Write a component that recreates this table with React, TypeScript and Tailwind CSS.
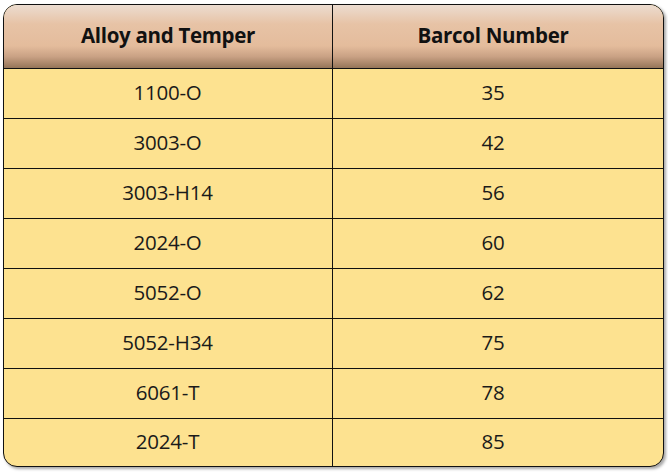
const rows = [
  ["1100-O", "35"],
  ["3003-O", "42"],
  ["3003-H14", "56"],
  ["2024-O", "60"],
  ["5052-O", "62"],
  ["5052-H34", "75"],
  ["6061-T", "78"],
  ["2024-T", "85"],
];

export default function App() {
  return (
    <div className="w-[668px] h-[472px] bg-white pl-[3px] pt-[4px]" style={{ fontFamily: '"Open Sans", "Noto Sans", sans-serif' }}>
      <div className="w-[661px] rounded-[14px] border-[1.5px] border-[#111] overflow-hidden shadow-[2px_2px_3px_rgba(0,0,0,0.35)] bg-[#fde290]">
        <div className="grid grid-cols-[329px_1fr] h-[64px] border-b-[1.5px] border-[#111] bg-[linear-gradient(to_bottom,#ecdcd0_0%,#e7c3a6_30%,#e4bc9c_65%,#c9a184_82%,#957559_100%)]">
          <div className="flex items-center justify-center border-r-[1.5px] border-[#111] text-[20.5px] font-bold tracking-[-0.3px] text-[#111] pb-[3px]">
            Alloy and Temper
          </div>
          <div className="flex items-center justify-center text-[20.5px] font-bold tracking-[-0.3px] text-[#111] pb-[3px] pr-[10px]">
            Barcol Number
          </div>
        </div>
        {rows.map(([alloy, num], i) => (
          <div
            key={alloy}
            className={
              i < rows.length - 1
                ? "grid grid-cols-[329px_1fr] h-[50px] border-b-[1.5px] border-[#111]"
                : "grid grid-cols-[329px_1fr] h-[47px]"
            }
          >
            <div className="flex items-center justify-center border-r-[1.5px] border-[#111] text-[20.5px] text-[#1a1a1a] tracking-[-0.2px] pb-[3px] pr-[1px]">
              {alloy}
            </div>
            <div className="flex items-center justify-center text-[20.5px] text-[#1a1a1a] tracking-[-0.2px] pb-[3px] pr-[10px]">
              {num}
            </div>
          </div>
        ))}
      </div>
    </div>
  );
}
